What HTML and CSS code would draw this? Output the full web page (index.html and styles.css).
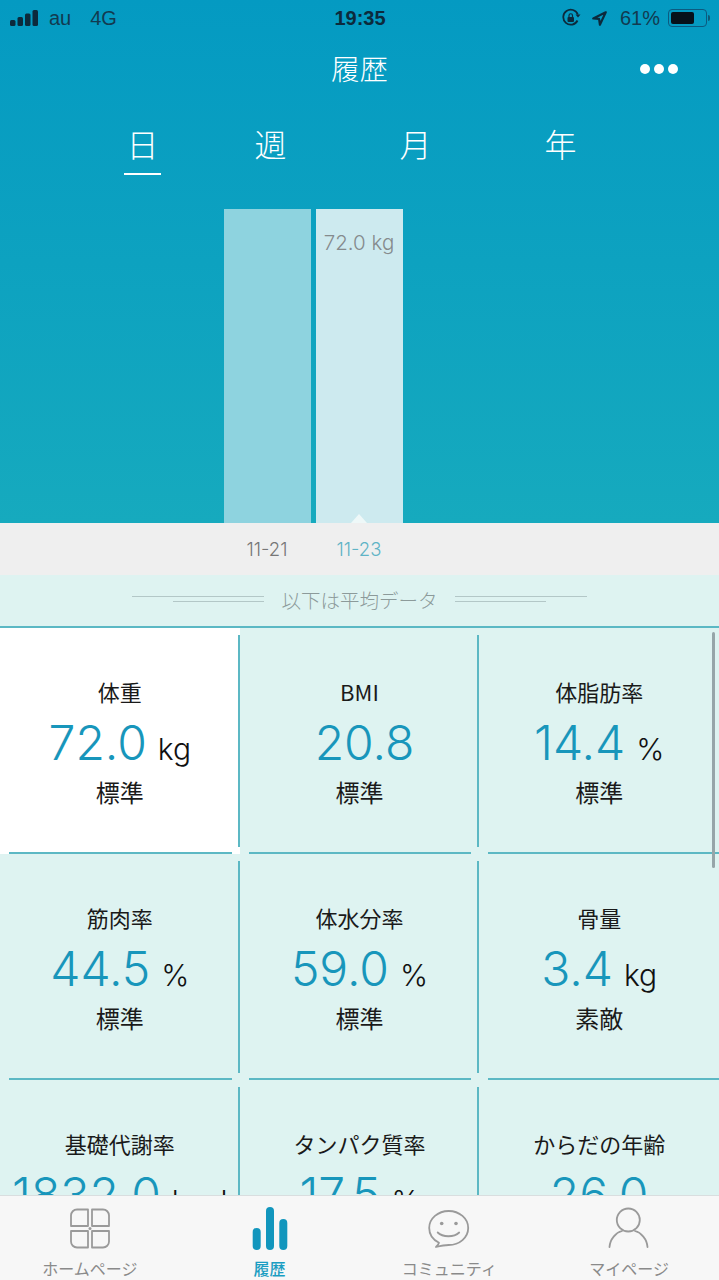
FILE: index.html
```html
<!DOCTYPE html>
<html lang="ja">
<head>
<meta charset="utf-8">
<title>履歴</title>
<link rel="stylesheet" href="styles.css">
</head>
<body>
<div class="page">
  <header class="hero">
    <div class="status">
      <div class="status-left">
        <svg class="signal" width="28" height="16" viewBox="0 0 28 16"><rect x="0" y="10" width="5.500" height="6" rx="1.500"/><rect x="7.500" y="7" width="5.500" height="9" rx="1.500"/><rect x="15" y="3.500" width="5.500" height="12.500" rx="1.500"/><rect x="22.500" y="0" width="5.500" height="16" rx="1.500"/></svg>
        <span class="carrier">au</span>
        <span class="carrier net">4G</span>
      </div>
      <div class="clock">19:35</div>
      <div class="status-right">
        <svg width="20" height="20" viewBox="0 0 20 20"><path d="M16.500 12.500A7.500 7.500 0 1 1 16.800 6.500" fill="none" stroke="#0c2a3c" stroke-width="1.800"/><path d="M14.500 6.500h5l-2.500 3z" fill="#0c2a3c"/><rect x="6.500" y="9" width="6.500" height="5" rx="1" fill="#0c2a3c"/><path d="M8 9V7.500a1.700 1.700 0 0 1 3.500 0V9" fill="none" stroke="#0c2a3c" stroke-width="1.200"/></svg>
        <svg class="gps" width="15" height="17" viewBox="0 0 18 18"><path d="M16.500 1.500 1.500 9 8.500 9.500 9.500 16.500z" fill="none" stroke="#0c2a3c" stroke-width="2.600" stroke-linejoin="round"/></svg>
        <span class="percent">61%</span>
        <div class="battery"><div class="battery-fill"></div></div>
        <div class="battery-cap"></div>
      </div>
    </div>
    <div class="titlebar">
      <h1 class="title">履歴</h1>
      <div class="more"><i></i><i></i><i></i></div>
    </div>
    <nav class="tabs">
      <div class="tab tab-active">日</div>
      <div class="tab">週</div>
      <div class="tab tab-far">月</div>
      <div class="tab tab-far">年</div>
    </nav>
    <div class="chart">
      <div class="bar bar-dim"></div>
      <div class="bar bar-current"><span class="bar-label">72.0 kg</span><span class="pointer"></span></div>
    </div>
  </header>

  <div class="dates">
    <span class="date">11-21</span>
    <span class="date date-current">11-23</span>
  </div>

  <div class="notice">
    <div class="rule rule-left"><i></i><i></i></div>
    <span class="notice-text">以下は平均データ</span>
    <div class="rule rule-right"><i></i><i></i></div>
  </div>

  <main class="metrics">
    <div class="grid">
      <section class="cell cell-active"><div class="name">体重</div><div class="reading"><span class="num">72.0</span><span class="unit">kg</span></div><div class="state">標準</div></section>
      <section class="cell"><div class="name">BMI</div><div class="reading reading-offset"><span class="num">20.8</span></div><div class="state">標準</div></section>
      <section class="cell"><div class="name">体脂肪率</div><div class="reading"><span class="num">14.4</span><span class="unit">%</span></div><div class="state">標準</div></section>
      <section class="cell"><div class="name">筋肉率</div><div class="reading"><span class="num">44.5</span><span class="unit">%</span></div><div class="state">標準</div></section>
      <section class="cell"><div class="name">体水分率</div><div class="reading"><span class="num">59.0</span><span class="unit">%</span></div><div class="state">標準</div></section>
      <section class="cell"><div class="name">骨量</div><div class="reading"><span class="num">3.4</span><span class="unit">kg</span></div><div class="state">素敵</div></section>
      <section class="cell"><div class="name">基礎代謝率</div><div class="reading"><span class="num">1832.0</span><span class="unit">kcal</span></div></section>
      <section class="cell"><div class="name">タンパク質率</div><div class="reading"><span class="num">17.5</span><span class="unit">%</span></div></section>
      <section class="cell"><div class="name">からだの年齢</div><div class="reading"><span class="num">26.0</span></div></section>
    </div>
    <div class="scrollbar"></div>
  </main>

  <footer class="tabbar">
    <div class="nav-item">
      <svg width="42" height="46" viewBox="0 0 42 46" fill="none" stroke="#9a9a9a" stroke-width="1.800" stroke-linejoin="round"><path d="M19 3.500H8a6 6 0 0 0-6 6V20h17z"/><path d="M23 3.500h11a6 6 0 0 1 6 6V20H23z"/><path d="M19 25H2v10.500a6 6 0 0 0 6 6h11z"/><path d="M23 25h17v10.500a6 6 0 0 1-6 6H23z"/><circle cx="21" cy="22.500" r="1.500" fill="#9a9a9a" stroke="none"/></svg>
      <span class="nav-label">ホームページ</span>
    </div>
    <div class="nav-item nav-active">
      <svg width="42" height="46" viewBox="0 0 42 46" fill="#1296bd"><rect x="3.700" y="22" width="8" height="22" rx="4"/><rect x="17" y="1" width="8" height="43" rx="4"/><rect x="30.300" y="13" width="8" height="31" rx="4"/></svg>
      <span class="nav-label">履歴</span>
    </div>
    <div class="nav-item">
      <svg width="42" height="46" viewBox="0 0 42 46" fill="none" stroke="#9a9a9a" stroke-width="1.800" stroke-linecap="round" stroke-linejoin="round"><path d="M11 36.800C4.500 33.500 1.200 28 1.200 22 1.200 12.500 10 5 20.700 5S40.200 12.500 40.200 22 31.500 39 20.700 39C16 39 12 40 8 41 9.500 39.500 10.500 38.500 11 36.800z"/><circle cx="13.700" cy="17.500" r="1.800" fill="#9a9a9a" stroke="none"/><circle cx="28" cy="17.500" r="1.800" fill="#9a9a9a" stroke="none"/><path d="M9.700 26.500c5 5 16.300 5 21.500 0"/></svg>
      <span class="nav-label">コミュニティ</span>
    </div>
    <div class="nav-item">
      <svg width="42" height="46" viewBox="0 0 42 46" fill="none" stroke="#9a9a9a" stroke-width="1.800" stroke-linecap="round"><circle cx="20.300" cy="14" r="11.500"/><path d="M1.500 41C2 33 8 26.500 14 25M39.500 41C39 33 33 26.500 27 25"/></svg>
      <span class="nav-label">マイページ</span>
    </div>
  </footer>
</div>
</body>
</html>
```
FILE: styles.css
```css
* { box-sizing: border-box; }
html, body { margin: 0; padding: 0; }
body { font-family: "Noto Sans CJK JP", "Noto Sans", sans-serif; background: #def3f1; }
.page { width: 719px; height: 1280px; display: flex; flex-direction: column; overflow: hidden; }

.hero { height: 523px; flex: none; display: flex; flex-direction: column; background: linear-gradient(180deg, #049ac2 0%, #16aabe 100%); }

.status { height: 36px; padding: 0 9px 0 10px; display: flex; align-items: center; position: relative; color: #0c2a3c; font-family: "Liberation Sans", sans-serif; }
.status-left { display: flex; align-items: center; flex: 1; }
.signal { fill: #0c2a3c; margin-right: 11px; margin-top: -1px; }
.carrier { font-size: 20px; color: #123a50; }
.net { margin-left: 19px; }
.clock { font-size: 20px; font-weight: 700; width: 70px; text-align: center; }
.status-right { flex: 1; display: flex; align-items: center; justify-content: flex-end; }
.gps { margin-left: 11px; }
.percent { font-size: 20px; margin-left: 13px; color: #123a50; }
.battery { width: 39px; height: 18px; margin-left: 8px; padding: 2px; border: 1px solid #0c5a80; border-radius: 4px; }
.battery-fill { width: 23px; height: 12px; background: #06111a; border-radius: 2px; }
.battery-cap { width: 2px; height: 6px; margin-left: 1px; background: #0c5a78; border-radius: 0 2px 2px 0; }

.titlebar { height: 66px; display: flex; align-items: center; justify-content: center; position: relative; }
.title { margin: 0 0 2px; font-size: 28.500px; font-weight: 300; color: #fff; line-height: 1; }
.more { position: absolute; left: 640px; top: 28px; display: flex; gap: 4px; }
.more i { width: 10px; height: 10px; border-radius: 50%; background: #fff; }

.tabs { display: flex; padding-left: 124px; margin-top: 4px; height: 103px; gap: 91px; }
.tab { width: 37px; height: 69px; padding-top: 14px; font-size: 32px; font-weight: 300; line-height: 46px; text-align: center; color: #fff; }
.tab-far { margin-left: 17px; }
.tab-active { border-bottom: 2px solid #fff; }

.chart { flex: 1; display: flex; justify-content: center; gap: 5px; padding-right: 93px; }
.bar { width: 87px; position: relative; }
.bar-dim { background: #8ed3df; }
.bar-current { background: #cdeaef; text-align: center; padding-top: 20px; }
.bar-label { font-family: Inter, sans-serif; font-weight: 300; font-size: 20.500px; line-height: 28px; color: #858b8d; white-space: nowrap; }
.pointer { position: absolute; left: 35px; bottom: 0; border-left: 8px solid transparent; border-right: 8px solid transparent; border-bottom: 9px solid #eef8f8; }

.dates { height: 52px; flex: none; background: #efefef; display: flex; justify-content: center; align-items: center; gap: 5px; padding-right: 93px; font-family: Inter, sans-serif; font-weight: 300; font-size: 18.500px; }
.date { width: 87px; text-align: center; color: #777; white-space: nowrap; }
.date-current { color: #5fb4c6; }

.notice { height: 53px; flex: none; background: #def3f1; display: flex; justify-content: center; align-items: center; gap: 17px; padding-bottom: 3px; border-bottom: 2px solid #5bb8c4; }
.notice-text { font-size: 19.500px; font-weight: 300; color: #8c9a9a; }
.rule { width: 132px; display: flex; flex-direction: column; gap: 4px; }
.rule i { display: block; height: 1px; background: #b3c7c7; }
.rule-left { align-items: flex-end; }
.rule-left i:last-child { width: 91px; }
.rule-right { align-items: flex-start; }
.rule-right i:last-child { width: 91px; }
.rule i:first-child { width: 132px; }

.metrics { flex: 1; min-height: 0; position: relative; overflow: hidden; background: #def3f1; }
.grid { display: grid; grid-template-columns: repeat(3, 1fr); grid-auto-rows: 226px; }
.cell { position: relative; padding-top: 48px; text-align: center; color: #1a1a1a; }
.cell-active { background: #fff; }
.cell::before { content: ""; position: absolute; right: 0; top: 7px; bottom: 7px; width: 2px; background: #5cb8c4; }
.cell::after { content: ""; position: absolute; left: 9px; right: 8px; bottom: 0; height: 2px; background: #5cb8c4; }
.cell:nth-child(3n)::before { display: none; }
.cell:nth-child(3n)::after { right: 0; }
.name { font-size: 22px; font-weight: 400; line-height: 30px; }
.reading { height: 56px; display: flex; justify-content: center; align-items: baseline; gap: 11px; line-height: 56px; margin-top: 9px; }
.reading-offset { padding-left: 10px; }
.num { font-family: Inter, sans-serif; font-size: 48px; font-weight: 300; color: #1896bb; }
.unit { font-family: Inter, sans-serif; font-size: 30px; font-weight: 300; color: #111; }
.state { font-size: 24px; font-weight: 400; line-height: 32px; margin-top: 5px; }
.scrollbar { position: absolute; right: 4px; top: 4px; width: 3px; height: 236px; border-radius: 2px; background: #96a5a9; }

.tabbar { height: 85px; flex: none; background: #f7f7f7; border-top: 1px solid #d9dedf; display: grid; grid-template-columns: repeat(4, 1fr); position: relative; }
.nav-item { display: flex; flex-direction: column; align-items: center; height: 84px; padding-top: 10px; position: relative; }
.nav-item svg { flex: none; }
.nav-label { font-size: 16px; font-weight: 400; color: #8a8a8a; line-height: 22px; margin-top: 5px; white-space: nowrap; }
.nav-active .nav-label { color: #1a9dc2; font-weight: 500; }
```
